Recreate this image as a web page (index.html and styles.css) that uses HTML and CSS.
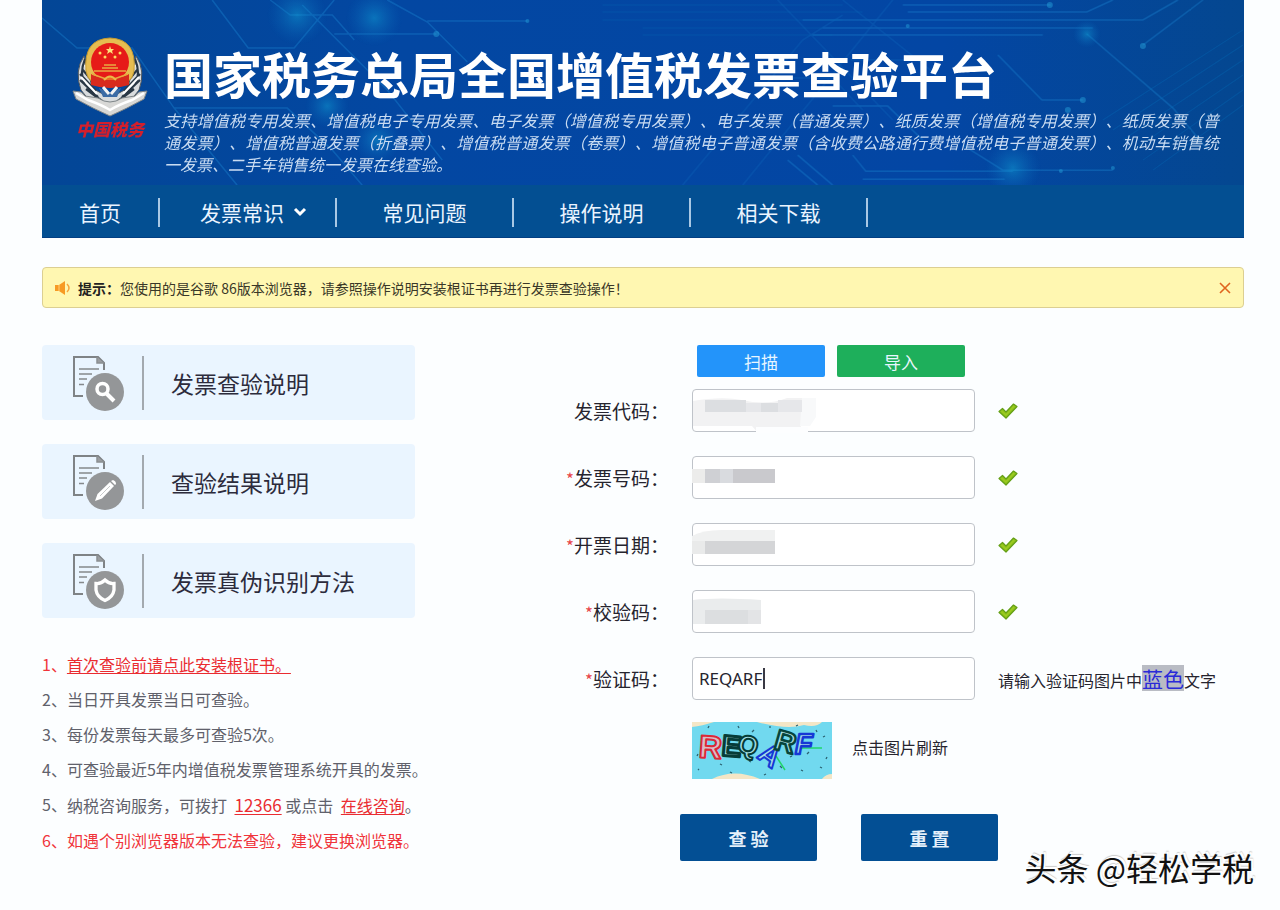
FILE: index.html
```html
<!DOCTYPE html>
<html lang="zh-CN">
<head>
<meta charset="utf-8">
<meta name="viewport" content="width=device-width, initial-scale=1">
<title>国家税务总局全国增值税发票查验平台</title>
<link rel="stylesheet" href="styles.css">
</head>
<body>
<svg class="defs" width="0" height="0" aria-hidden="true">
  <symbol id="doc" viewBox="0 0 54 56">
    <path d="M11 40H2V1H26L32 7V14" fill="none" stroke="#7f8386" stroke-width="2"/>
    <path d="M25 1V7H32" fill="#9a9da0" stroke="#8b8e91" stroke-width="1.5"/>
    <path d="M7 13H27M7 18H20M7 23H15M7 28.500H12" stroke="#85898c" stroke-width="1.7"/>
    <circle cx="33" cy="36" r="19" fill="#949698"/>
  </symbol>
  <symbol id="check" viewBox="0 0 20 16">
    <path d="M1 8.500L4.500 5.500L8 9L15.500 1L19 3.500L8 15Z" fill="#8fc31a" stroke="#649f16" stroke-width="1.2" stroke-linejoin="round"/>
    <path d="M3.500 8L8 12L16 3" fill="none" stroke="#9ccb22" stroke-width="1.2"/>
  </symbol>
</svg>
<div class="page">
  <header class="banner">
    <svg class="circuit" viewBox="0 0 1201 185" preserveAspectRatio="xMidYMid slice" aria-hidden="true">
      <defs>
        <radialGradient id="glow"><stop offset="0" stop-color="#12a0d6" stop-opacity=".5"/><stop offset="1" stop-color="#0b6dc0" stop-opacity="0"/></radialGradient>
      </defs>
      <g fill="none" stroke="#1c86d2" stroke-width="1.500" opacity=".4">
        <path d="M0 18L35 48H90L132 108H245L290 150L320 185M170 0L206 48H252L292 0M228 0L248 15H290L312 40M345 0L385 22L425 62M260 5L345 90L400 160M292 34H394M385 21H485M132 108L195 185"/>
        <path d="M640 185L760 40L800 15M700 185L850 0M735 0L850 120M800 0L900 80M808 60H890M720 78H790L820 110" opacity=".5"/>
        <path d="M760 20H1100L1135 0M780 28H1050M770 35H1000M1100 45L1160 0M860 5H1008M865 12H1044L1070 0M955 55L999 100H1040M1044 34L1130 108L1165 150M790 106H845L880 140M920 145L960 170H1070M810 155L823 171H970M820 179H962M745 160L775 185M755 155L790 185"/>
      </g>
      <g fill="none" stroke="#0870bd" opacity=".3"><path d="M560 5H800M560 12H820M560 20H800M600 28H780M600 35H790M1060 120L1200 30M1070 130L1200 45M1080 140L1200 60M1090 150L1200 75M1100 160L1200 90M1110 170L1200 105"/></g>
      <circle cx="255" cy="15" r="30" fill="url(#glow)"/><circle cx="332" cy="18" r="28" fill="url(#glow)"/>
      <circle cx="285" cy="106" r="22" fill="url(#glow)"/><circle cx="335" cy="140" r="24" fill="url(#glow)"/>
      <circle cx="1044" cy="34" r="14" fill="url(#glow)"/><circle cx="970" cy="168" r="28" fill="url(#glow)"/>
      <g fill="#249bd6" opacity=".5"><circle cx="394" cy="34" r="3"/><circle cx="485" cy="21" r="2"/><circle cx="1007" cy="5" r="3"/><circle cx="1040" cy="100" r="3"/><circle cx="1100" cy="46" r="3"/><circle cx="1018" cy="171" r="2"/><circle cx="1070" cy="168" r="2"/><circle cx="865" cy="26" r="2"/><circle cx="1025" cy="110" r="3"/></g>
    </svg>
    <div class="brand">
      <div class="logo">
        <svg class="emblem" viewBox="0 0 76 80" role="img" aria-label="中国税务">
          <path d="M12 19Q2 34 9 53Q20 70 38 70Q56 70 67 53Q74 34 64 19L56 50Q38 66 20 50Z" fill="#d9dcde" stroke="#50585f"/>
          <path d="M13 22Q7 37 13 48M10 32L22 46M8 37L24 54M8 43L26 60M14 52L30 64M63 22Q69 37 63 48M66 32L54 46M68 37L52 54M68 43L50 60M62 52L46 64" fill="none" stroke="#293744" stroke-width="2.200"/>
          <path d="M13 28L20 42M9 40L25 57M63 28L56 42M67 40L51 57" fill="none" stroke="#fff" stroke-width="2"/>
          <path d="M14 34Q11 2 38 1Q65 2 62 34Q60 49 38 50Q16 49 14 34Z" fill="#e6bd50" stroke="#c49a31"/>
          <ellipse cx="38" cy="25" rx="19" ry="19" fill="#e61b18"/>
          <path d="M38 9L39 12H42L40 14L41 17L38 15L35 17L36 14L34 12H37Z" fill="#ffe37a"/>
          <g fill="#ffd961"><circle cx="28" cy="16" r="1.500"/><circle cx="48" cy="16" r="1.500"/><circle cx="33" cy="20" r="1.500"/><circle cx="43" cy="20" r="1.500"/></g>
          <path d="M19 37Q38 46 57 37V48Q38 54 19 48Z" fill="#d72a1d"/>
          <path d="M32 28H44M30 31H46M22 34H54M20 37L34 42M56 37L42 42" stroke="#e9a941" stroke-width="1.600" fill="none"/>
          <path d="M32 43Q38 36 44 43" fill="#ed6b25" stroke="#eabb48" stroke-width="2"/>
          <path d="M27 51L38 56L49 51L45 60H31Z" fill="#3b6ba5"/>
          <path d="M31 50L37 57M45 50L39 57" stroke="#f3f3f3" stroke-width="3"/>
          <path d="M1 54L9 55L13 59L26 61Q38 69 50 61L63 59L67 55L75 54L72 62Q54 72 38 79Q22 72 4 62Z" fill="#d8d8d6" stroke="#7e8588"/>
          <path d="M4 56L16 63Q30 68 38 73Q46 68 60 63L72 56" fill="none" stroke="#fff" stroke-width="2.500"/>
        </svg>
        <span class="logo-name">中国税务</span>
      </div>
      <div class="heading">
        <h1>国家税务总局全国增值税发票查验平台</h1>
        <p>支持增值税专用发票、增值税电子专用发票、电子发票（增值税专用发票）、电子发票（普通发票）、纸质发票（增值税专用发票）、纸质发票（普通发票）、增值税普通发票（折叠票）、增值税普通发票（卷票）、增值税电子普通发票（含收费公路通行费增值税电子普通发票）、机动车销售统一发票、二手车销售统一发票在线查验。</p>
      </div>
    </div>
    <nav class="nav">
      <a class="home" href="#">首页</a>
      <a class="more" href="#">发票常识<svg width="14" height="10" viewBox="0 0 14 10" aria-hidden="true"><path d="M2 2L7 7L12 2" fill="none" stroke="#fff" stroke-width="3"/></svg></a>
      <a href="#">常见问题</a>
      <a href="#">操作说明</a>
      <a href="#">相关下载</a>
    </nav>
  </header>

  <div class="notice" role="alert">
    <svg width="16" height="14" viewBox="0 0 16 14" aria-hidden="true"><path d="M0 4H4L10 0V14L4 10H0Z" fill="#f79a24"/><path d="M4 4V10" stroke="#ffd078"/><path d="M12 3Q16 7 12 11" fill="none" stroke="#f7a43c" stroke-width="1.500"/></svg>
    <p><strong>提示：</strong>您使用的是谷歌 86版本浏览器，请参照操作说明安装根证书再进行发票查验操作！</p>
    <button type="button" class="close" aria-label="关闭"><svg width="12" height="12" viewBox="0 0 12 12"><path d="M1 1L11 11M11 1L1 11" stroke="#e0641e" stroke-width="1.600"/></svg></button>
  </div>

  <main class="content">
    <aside class="side">
      <div class="cards">
        <a class="card" href="#"><span class="card-icon"><svg viewBox="0 0 54 56" aria-hidden="true"><use href="#doc"/><circle cx="30.500" cy="33" r="5.500" fill="none" stroke="#fff" stroke-width="3.500"/><path d="M35 38L42 45" stroke="#fff" stroke-width="4"/></svg></span><span>发票查验说明</span></a>
        <a class="card" href="#"><span class="card-icon"><svg viewBox="0 0 54 56" aria-hidden="true"><use href="#doc"/><path d="M23 46L25.500 39L38 27L42 31L30 43.500Z" fill="#fff"/><path d="M39 26L41 25Q44 26 44 29L43 30Z" fill="#fff"/><path d="M28 41L38 31" stroke="#b9bbbd" stroke-width=".8"/></svg></span><span>查验结果说明</span></a>
        <a class="card" href="#"><span class="card-icon"><svg viewBox="0 0 54 56" aria-hidden="true"><use href="#doc"/><path d="M33 26Q37 30 42 29.500V36Q41 43 33 46.500Q25 43 24 36V29.500Q29 30 33 26Z" fill="none" stroke="#fff" stroke-width="3.300"/></svg></span><span>发票真伪识别方法</span></a>
      </div>
      <ol class="tips">
        <li class="hot"><span>1、</span><span><a href="#">首次查验前请点此安装根证书。</a></span></li>
        <li><span>2、</span><span>当日开具发票当日可查验。</span></li>
        <li><span>3、</span><span>每份发票每天最多可查验5次。</span></li>
        <li><span>4、</span><span>可查验最近5年内增值税发票管理系统开具的发票。</span></li>
        <li><span>5、</span><span>纳税咨询服务，可拨打 <a class="phone" href="#">12366</a> 或点击 <a class="chat" href="#">在线咨询</a>。</span></li>
        <li class="hot"><span>6、</span><span>如遇个别浏览器版本无法查验，建议更换浏览器。</span></li>
      </ol>
    </aside>

    <form class="form">
      <div class="upload">
        <button type="button" class="scan">扫描</button>
        <button type="button" class="import">导入</button>
      </div>
      <div class="fields">
        <label for="code">发票代码：</label>
        <div class="box"><input id="code" type="text">
          <svg class="mask" width="140" height="44" aria-hidden="true"><path d="M1 12Q30 7 50 11Q75 17 95 9H110V36L104 44H66L60 37H1Z" fill="#f2f2f3"/><path d="M110 9H124V28L118 37H108Z" fill="#f8f9fa"/><path d="M64 38H116V44H64Z" fill="#fdfeff"/><path d="M13 11H54V23H13ZM69 14H86V23H69Z" fill="#dcdee1"/><path d="M54 14H69V23H54ZM86 11H110V23H86Z" fill="#e6e7ea"/></svg></div>
        <svg class="ok" role="img" aria-label="正确"><use href="#check"/></svg>

        <label for="number"><i>*</i>发票号码：</label>
        <div class="box"><input id="number" type="text">
          <svg class="mask" width="140" height="44" aria-hidden="true"><path d="M0 13H13V27H0Z" fill="#ececeb"/><path d="M13 13H83V27H13Z" fill="#cfd0d4"/><path d="M28 13H41V27H28Z" fill="#d9dbdf"/><path d="M41 13H83V27H41Z" fill="#c9c9cd"/></svg></div>
        <svg class="ok" role="img" aria-label="正确"><use href="#check"/></svg>

        <label for="date"><i>*</i>开票日期：</label>
        <div class="box"><input id="date" type="text">
          <svg class="mask" width="140" height="44" aria-hidden="true"><path d="M0 13Q10 7 30 7H83V18H0Z" fill="#f0f1f1"/><path d="M0 18H13V31H0Z" fill="#e9eaea"/><path d="M13 18H83V31H13Z" fill="#d4d5d7"/></svg></div>
        <svg class="ok" role="img" aria-label="正确"><use href="#check"/></svg>

        <label for="verify"><i>*</i>校验码：</label>
        <div class="box"><input id="verify" type="text">
          <svg class="mask" width="140" height="44" aria-hidden="true"><path d="M1 10Q25 7 69 10V34H1Z" fill="#eaeced"/><path d="M13 20H56V34H13Z" fill="#dcdee0"/><path d="M56 20H69V34H56Z" fill="#e3e4e6"/></svg></div>
        <svg class="ok" role="img" aria-label="正确"><use href="#check"/></svg>

        <label for="captcha"><i>*</i>验证码：</label>
        <div class="box"><input id="captcha" type="text" value="REQARF"><span class="caret"></span></div>
        <span class="hint">请输入验证码图片中<em>蓝色</em>文字</span>
      </div>
      <div class="refresh">
        <button type="button" class="captcha" aria-label="刷新验证码">
          <svg viewBox="0 0 140 57" aria-hidden="true">
            <rect width="140" height="57" fill="#71d9ef"/>
            <path d="M0 0H22Q10 4 0 5ZM65 0H130Q124 6 112 3Q95 8 65 0ZM20 57Q42 46 68 57ZM130 57Q134 52 140 52V57Z" fill="#f4e6c6"/>
            <path d="M12 20l2-2M28 42l2 1M46 4l1 2M60 10l2-2M78 4v2M88 44l2 2M98 35l2-1M109 48l2 1M117 30l-2 2M124 8l1 2M131 15l2-1M128 45l2 1M5 34l1-2M38 50l2 1M72 53l2-1M16 6l1-2M104 4l2-1M134 37l1-2M57 39l2 1M6 48l1-1" stroke="#2a6170" stroke-width="1.300"/>
            <path d="M84 34L93 48M107 26H130" stroke="#21d66b" stroke-width="1.500"/>
            <g font-family="Liberation Sans, sans-serif" font-size="30" font-weight="700" fill="#a5dfe5" stroke-width="2" stroke-linejoin="round">
              <text x="7" y="36" font-size="32" fill="#d9bcc8" stroke="#dc2837" transform="rotate(4 18 25)">R</text>
              <text x="30" y="34" font-size="29" stroke="#063c38" stroke-width="3" transform="rotate(5 39 24)">E</text>
              <text x="46" y="32" font-size="26" stroke="#063c38" transform="rotate(14 56 24)">Q</text>
              <text x="68" y="43" font-size="28" stroke="#1638d5" transform="rotate(36 78 33)">A</text>
              <text x="83" y="30" font-size="29" stroke="#07453c" stroke-width="2.500" transform="rotate(16 94 20)">R</text>
              <text x="103" y="32" font-size="29" font-style="italic" stroke="#1638d5" stroke-width="2.500">F</text>
            </g>
          </svg>
        </button>
        <span>点击图片刷新</span>
      </div>
      <div class="actions">
        <button type="submit">查 验</button>
        <button type="reset">重 置</button>
      </div>
    </form>
  </main>
  <div class="watermark">头条 @轻松学税</div>
</div>
</body>
</html>
```
FILE: styles.css
```css
* { box-sizing: border-box; }
body {
  margin: 0;
  background: #fcfeff;
  color: #26242e;
  font-family: "Noto Sans CJK SC", sans-serif;
  font-size: 16px;
  text-spacing-trim: space-all;
}
h1, p, ol { margin: 0; padding: 0; }
button, input { font-family: inherit; }
button { border: 0; cursor: pointer; }
.defs { position: absolute; }
.page { position: relative; padding: 0 36px 0 42px; min-height: 910px; }

.banner {
  position: relative;
  background: linear-gradient(90deg, #034696 0%, #0347a2 30%, #0346a4 75%, #044790 100%);
  color: #fff;
}
.circuit { position: absolute; inset: 0; width: 100%; height: 185px; }
.brand {
  position: relative;
  display: flex;
  gap: 16px;
  padding: 37px 16px 10px 30px;
}
.logo {
  flex: none;
  width: 76px;
  display: flex;
  flex-direction: column;
  align-items: center;
}
.emblem { width: 76px; height: 80px; }
.logo-name {
  color: #d31f2c;
  font-size: 17px;
  line-height: 24px;
  font-weight: 900;
  font-style: italic;
}
.heading { flex: 1; min-width: 0; }
h1 {
  font-size: 49px;
  line-height: 72px;
  font-weight: 700;
}
.heading p {
  max-width: 1055px;
  font-size: 16px;
  line-height: 22px;
  font-style: italic;
  text-align: justify;
  color: #c9dcf2;
}
.nav {
  position: relative;
  display: flex;
  height: 53px;
  padding-top: 2px;
  align-items: center;
  background: #034f92;
  border-bottom: 1px solid #033f83;
}
.nav a {
  width: 177px;
  height: 29px;
  display: flex;
  align-items: center;
  justify-content: center;
  gap: 9px;
  border-right: 2px solid #a9c8e4;
  color: #eaf4ff;
  font-size: 21px;
  line-height: 29px;
  text-decoration: none;
}
.nav .home { width: 118px; }
.nav .more { padding-left: 12px; }

.notice {
  display: flex;
  align-items: center;
  gap: 7px;
  height: 41px;
  margin-top: 29px;
  padding: 0 12px;
  border: 1px solid #dccf92;
  border-radius: 4px;
  background: #fff7b1;
  color: #3a3828;
  font-size: 14px;
}
.notice p { flex: 1; }
.notice strong { color: #222; }
.close { display: flex; padding: 0; background: none; }

.content { display: flex; margin-top: 37px; }
.side { width: 373px; flex: none; }
.cards { display: flex; flex-direction: column; gap: 24px; }
.card {
  display: flex;
  align-items: center;
  gap: 27px;
  height: 75px;
  padding-left: 30px;
  border-radius: 4px;
  background: #eaf5ff;
  color: #2c2b3c;
  font-size: 23px;
  text-decoration: none;
}
.card-icon {
  display: flex;
  width: 72px;
  height: 54px;
  border-right: 2px solid #a3a9af;
}
.card-icon svg { width: 54px; height: 56px; }
.tips {
  list-style: none;
  margin-top: 29px;
  color: #60616b;
  line-height: 35px;
  white-space: nowrap;
}
.tips li { display: flex; }
.tips a { color: #ea2c31; text-underline-offset: 2px; }
.tips .hot { color: #f0343a; }
.tips .phone { font-size: 17px; margin-left: 4px; }
.tips .chat { margin-left: 4px; }

.form { flex: 1; min-width: 0; }
.upload { display: flex; gap: 12px; padding-left: 282px; }
.upload button {
  width: 128px;
  height: 32px;
  padding: 0;
  border-radius: 2px;
  color: #e8f6ff;
  font-size: 17px;
}
.upload .scan { background: #2394fa; }
.upload .import { background: #1eaf5b; }
.fields {
  display: grid;
  grid-template-columns: 254px 283px 1fr;
  grid-auto-rows: 43px;
  gap: 24px 23px;
  align-items: center;
  margin-top: 12px;
}
.fields label { text-align: right; font-size: 19px; white-space: nowrap; }
.fields label i { color: #e8464a; font-style: normal; font-size: 17px; }
.box { position: relative; height: 43px; }
.box input {
  width: 100%;
  height: 43px;
  padding: 0 6px;
  border: 1px solid #bfc3c9;
  border-radius: 4px;
  background: #fff;
  color: #26242e;
  font-family: "Noto Sans", sans-serif;
  font-size: 17px;
  outline: none;
}
.mask { position: absolute; left: 0; top: 0; }
.caret { position: absolute; left: 71px; top: 11px; width: 2px; height: 21px; background: #3a3944; }
.ok { width: 20px; height: 16px; }
.hint { white-space: nowrap; line-height: 26px; }
.hint em { font-style: normal; font-size: 21px; line-height: 26px; color: #2a2ad8; background: #b9bcc4; display: inline-block; }
.refresh { display: flex; align-items: flex-start; gap: 20px; margin-top: 22px; padding-left: 277px; line-height: 50px; }
.captcha { display: flex; width: 140px; height: 57px; padding: 0; }
.captcha svg { width: 140px; height: 57px; }
.actions { display: flex; gap: 44px; margin-top: 35px; padding-left: 265px; }
.actions button {
  width: 137px;
  height: 47px;
  border-radius: 2px;
  background: #034f94;
  color: #e4effa;
  font-size: 18px;
  font-weight: 700;
}
.watermark {
  position: absolute;
  right: 26px;
  bottom: 19px;
  color: #111;
  font-size: 32px;
  line-height: 48px;
  text-shadow: 2px -2px 0 #fff, 2px -3px 1px #ccc;
}
```
